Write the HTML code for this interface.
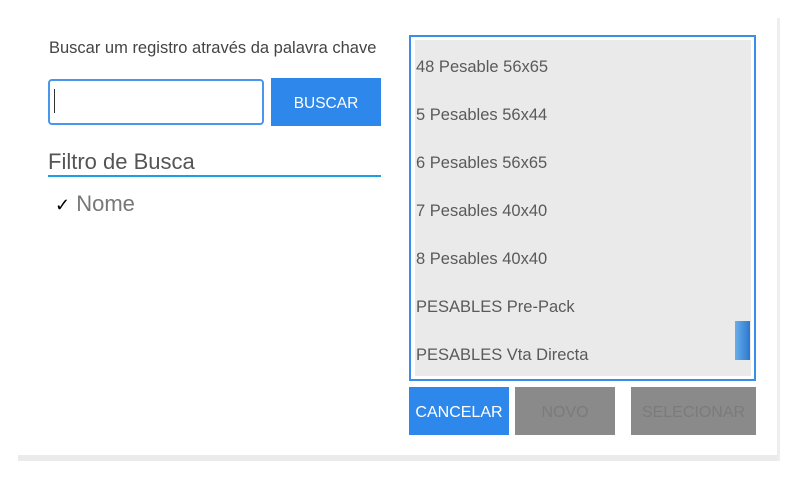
<!DOCTYPE html>
<html><head><meta charset="utf-8"><style>
body{margin:0;width:799px;height:480px;background:#fff;position:relative;overflow:hidden;font-family:"Liberation Sans",sans-serif}
.a{position:absolute}
.item{position:absolute;left:416px;font-size:16.5px;color:#5a5a5a;line-height:20px}
.btn{position:absolute;color:#fff;font-size:16px;text-align:center;height:48px;line-height:52px;overflow:hidden}
</style></head><body>
<div class="a" style="left:777px;top:18px;width:3px;height:443px;background:#eee"></div>
<div class="a" style="left:18px;top:455px;width:759px;height:6px;background:#ebebeb"></div>
<div class="a" style="left:49px;top:39px;font-size:16.5px;color:#444">Buscar um registro através da palavra chave</div>
<div class="a" style="left:48px;top:79px;width:212px;height:42px;border:2px solid #4a96ea;border-radius:4px"></div>
<div class="a" style="left:54px;top:89px;width:1px;height:24px;background:#333"></div>
<div class="btn" style="left:271px;top:78px;width:110px;background:#2e87ea;font-size:15.5px">BUSCAR</div>
<div class="a" style="left:48px;top:149px;font-size:22px;color:#555">Filtro de Busca</div>
<div class="a" style="left:48px;top:175px;width:333px;height:2px;background:#1ba1e2"></div>
<div class="a" style="left:55px;top:191px;font-size:22px;color:#777"><span style="color:#000;font-size:18px">✓</span> Nome</div>
<div class="a" style="left:409px;top:35px;width:343px;height:342px;border:2px solid #3a8ee6;background:#fff"></div>
<div class="a" style="left:415px;top:40px;width:336px;height:336px;background:#e9eae9"></div>
<div class="item" style="top:57px">48 Pesable 56x65</div>
<div class="item" style="top:105px">5 Pesables 56x44</div>
<div class="item" style="top:153px">6 Pesables 56x65</div>
<div class="item" style="top:201px">7 Pesables 40x40</div>
<div class="item" style="top:249px">8 Pesables 40x40</div>
<div class="item" style="top:297px">PESABLES Pre-Pack</div>
<div class="item" style="top:345px">PESABLES Vta Directa</div>
<div class="a" style="left:735px;top:321px;width:15px;height:39px;background:linear-gradient(90deg,#6aaeea,#2a78d0)"></div>
<div class="btn" style="left:409px;top:387px;width:100px;background:#2e87ea">CANCELAR</div>
<div class="btn" style="left:515px;top:387px;width:100px;background:#8a8a8a;color:#7b7b7b">NOVO</div>
<div class="btn" style="left:631px;top:387px;width:125px;background:#8a8a8a;color:#7b7b7b">SELECIONAR</div>
</body></html>
